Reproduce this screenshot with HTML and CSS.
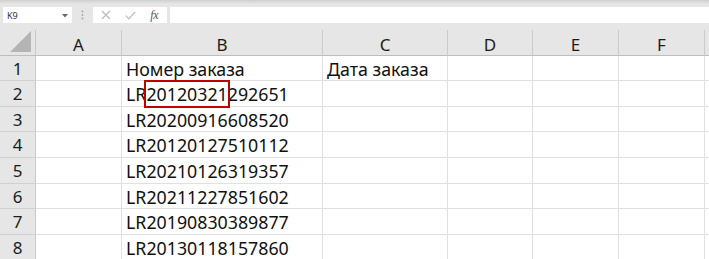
FILE: index.html
```html
<!DOCTYPE html>
<html lang="ru">
<head>
    <meta charset="UTF-8">
    <title>Номер заказа</title>
    <link rel="stylesheet" href="styles.css">
</head>
<body>
    <div class="toolbar">
        <div class="name-box">
            <span>K9</span>
            <svg class="caret" width="6" height="4" viewBox="0 0 6 4"><path d="M0 0h6L3 3.5z" fill="#6b6b6b"/></svg>
        </div>
        <div class="grip">
            <svg width="3" height="10" viewBox="0 0 3 10"><circle cx="1.5" cy="1.5" r="0.9" fill="#a6a6a6"/><circle cx="1.5" cy="5" r="0.9" fill="#a6a6a6"/><circle cx="1.5" cy="8.5" r="0.9" fill="#a6a6a6"/></svg>
        </div>
        <div class="fx-buttons">
            <svg width="10" height="10" viewBox="0 0 10 10"><path d="M1 1l8 8M9 1l-8 8" stroke="#b9b9b9" stroke-width="1.1"/></svg>
            <svg width="11" height="9" viewBox="0 0 11 9"><path d="M0.8 4.6l3 3.2 6.4-7" stroke="#b9b9b9" stroke-width="1.2" fill="none"/></svg>
            <span class="fx">fx</span>
        </div>
        <div class="formula"></div>
    </div>

    <div class="sheet">
        <div class="corner"><div class="tri"></div></div>
        <div class="col-head">A</div>
        <div class="col-head">B</div>
        <div class="col-head">C</div>
        <div class="col-head">D</div>
        <div class="col-head">E</div>
        <div class="col-head">F</div>
        <div class="col-head edge"></div>
    </div>

    <script>
        // строки таблицы
        const rows = [
            ['', 'Номер заказа', 'Дата заказа'],
            ['', 'LR<span class="mark">20120321</span>292651', ''],
            ['', 'LR20200916608520', ''],
            ['', 'LR20120127510112', ''],
            ['', 'LR20210126319357', ''],
            ['', 'LR20211227851602', ''],
            ['', 'LR20190830389877', ''],
            ['', 'LR20130118157860', '']
        ];
        const sheet = document.querySelector('.sheet');
        rows.forEach((row, i) => {
            let html = `<div class="row-head">${i + 1}</div>`;
            for (let c = 0; c < 6; c++) {
                html += `<div class="cell">${row[c] || ''}</div>`;
            }
            html += '<div class="cell edge"></div>';
            sheet.insertAdjacentHTML('beforeend', html);
        });
    </script>
</body>
</html>
```

FILE: styles.css
```css
body {
    margin: 0;
    background-color: #e6e6e6;
    font-family: "Noto Sans", "Open Sans", sans-serif;
    overflow: hidden;
}

/* Панель формул */
.toolbar {
    height: 30px;
    box-sizing: border-box;
    padding: 7px 0 7px 3px;
    display: flex;
    align-items: stretch;
    background: linear-gradient(#cfcfcf, #e6e6e6 4px);
}

.name-box {
    width: 69px;
    background-color: #fff;
    display: flex;
    align-items: center;
    justify-content: space-between;
    padding: 0 4px 0 4px;
    box-sizing: border-box;
    font-size: 9px;
    color: #333;
}

.caret {
    margin-top: 1px;
}

.grip {
    width: 21px;
    display: flex;
    align-items: center;
    justify-content: center;
}

.fx-buttons {
    width: 74px;
    background-color: #fff;
    display: flex;
    align-items: center;
    justify-content: space-between;
    padding: 0 9px 0 8px;
    box-sizing: border-box;
}

.fx {
    font-family: "Liberation Serif", serif;
    font-style: italic;
    font-size: 12px;
    color: #555;
    letter-spacing: -0.5px;
}

.formula {
    flex: 1;
    margin-left: 3px;
    background-color: #fff;
}

/* Лист */
.sheet {
    display: grid;
    grid-template-columns: 36px 86px 201px 125px 85px 86px 86px 4px;
    grid-template-rows: 26px 25px 26px 25px 26px 26px 25px 26px 26px;
    background-color: #fff;
}

.corner {
    background-color: #e6e6e6;
    border-right: 1px solid #c8c8c8;
    border-bottom: 1px solid #bdbdbd;
    position: relative;
}

.tri {
    position: absolute;
    right: 4px;
    bottom: 3px;
    width: 0;
    height: 0;
    border-left: 21px solid transparent;
    border-bottom: 21px solid #b4b4b4;
}

.col-head {
    background-color: #e6e6e6;
    border-right: 1px solid #cbcbcb;
    border-bottom: 1px solid #bdbdbd;
    text-align: center;
    font-size: 17px;
    line-height: 29px;
    color: #1b1b1b;
}

.row-head {
    background-color: #e6e6e6;
    border-right: 1px solid #c8c8c8;
    border-bottom: 1px solid #d0d0d0;
    text-align: center;
    font-size: 17px;
    line-height: 26px;
    color: #1b1b1b;
}

.cell {
    border-right: 1px solid #e0e0e0;
    border-bottom: 1px solid #e0e0e0;
    padding-left: 4px;
    font-size: 17.8px;
    line-height: 26px;
    color: #111;
    white-space: nowrap;
}

.edge {
    border-right: none;
}

.mark {
    outline: 2px solid #c00000;
    outline-offset: 0;
}
```
